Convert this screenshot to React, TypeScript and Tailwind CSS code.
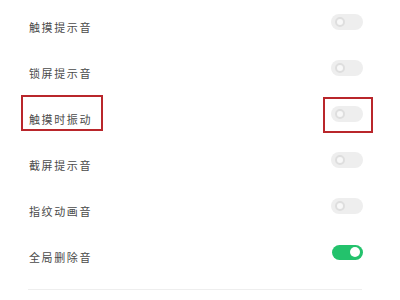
import React from "react";

const rows = [
  { label: "触摸提示音", on: false, mark: false },
  { label: "锁屏提示音", on: false, mark: false },
  { label: "触摸时振动", on: false, mark: true },
  { label: "截屏提示音", on: false, mark: false },
  { label: "指纹动画音", on: false, mark: false },
  { label: "全局删除音", on: true, mark: false },
];

function Toggle({ on }: { on: boolean }) {
  if (on) {
    return (
      <div className="flex h-[15px] w-[31px] items-center justify-end rounded-full bg-[#23c26c] pr-[3px]">
        <div className="h-[10px] w-[10px] rounded-full bg-white" />
      </div>
    );
  }
  return (
    <div className="flex h-[16px] w-[32px] items-center rounded-full bg-[#eeeeee] pl-[4px]">
      <div className="h-[10px] w-[10px] rounded-full border-2 border-[#dedede] bg-[#f8f8f8]" />
    </div>
  );
}

export default function App() {
  return (
    <div
      className="h-[300px] w-[400px] overflow-hidden bg-white pt-[2px]"
      style={{ fontFamily: '"Noto Sans CJK SC", "Noto Sans", sans-serif' }}
    >
      {rows.map((r) => (
        <div key={r.label} className="flex h-[46px] items-center justify-between pl-[29px] pr-[37px]">
          <div className="relative">
            <span className="text-[11px] tracking-[1.6px] text-[#4a4a4a]">{r.label}</span>
            {r.mark && (
              <div className="absolute left-[-8px] top-[-10px] h-[36px] w-[82px] border-[2.5px] border-[#b9262b]" />
            )}
          </div>
          <div className="relative mb-[6px]">
            <Toggle on={r.on} />
            {r.mark && (
              <div className="absolute left-[-8px] top-[-9px] h-[36px] w-[50px] border-[2.5px] border-[#b9262b]" />
            )}
          </div>
        </div>
      ))}
      <div className="ml-[28px] mr-[38px] mt-[11px] h-px bg-[#eeeeee]" />
    </div>
  );
}
